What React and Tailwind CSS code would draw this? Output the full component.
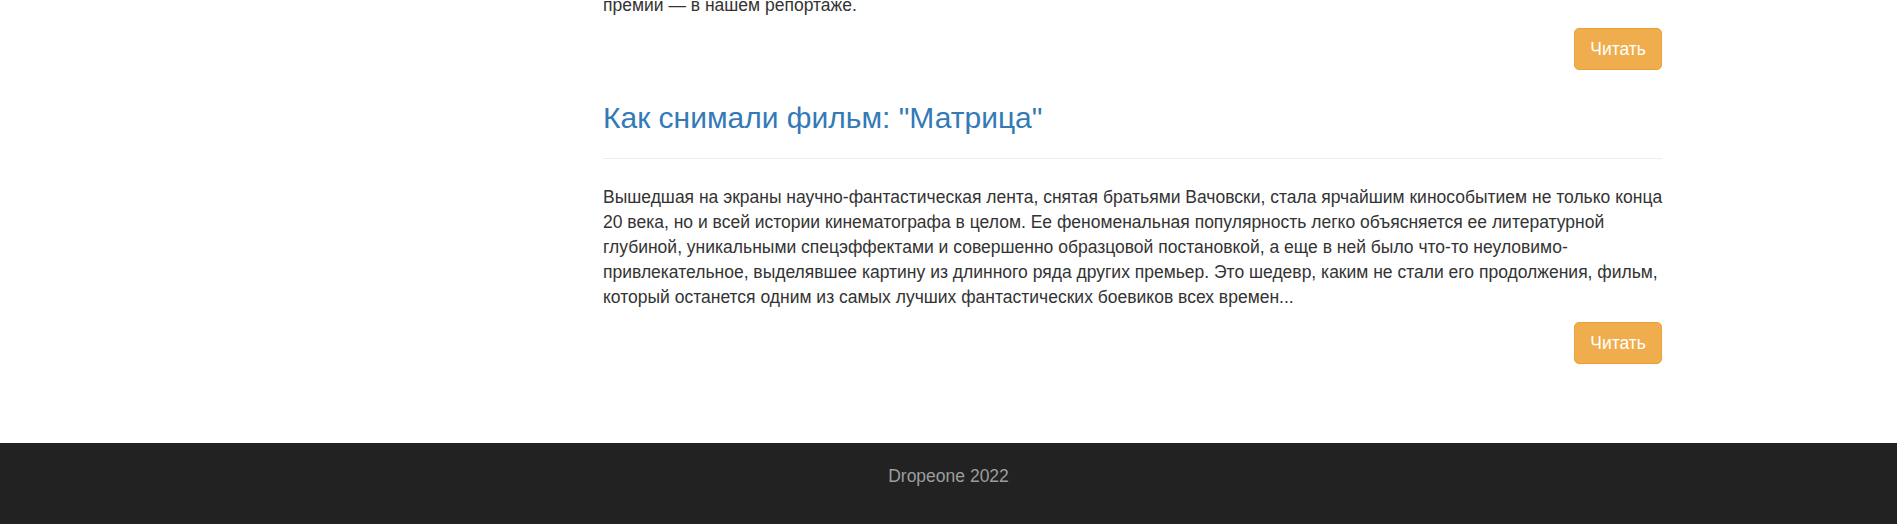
export default function App() {
	return (
		<div className="min-h-[524px] flex flex-col bg-white font-['Liberation_Sans',Arial,sans-serif] text-[17.5px] leading-[25px] text-[#333] overflow-hidden">
			<main className="flex-1 pl-[603px] pb-[79px]">
				<section className="w-[1059px]">
					{/* tail of previous post, scrolled off the top */}
					<article>
						<p className="-mt-[7.5px]">премии — в нашем репортаже.</p>
						<div className="flex justify-end mt-[10.5px]">
							<button className="h-[42px] px-[15px] rounded-[5px] bg-[#f0ad4e] border border-[#eea236] text-white">
								Читать
							</button>
						</div>
					</article>

					<article className="mt-[31px]">
						<h3 className="text-[30px] leading-[33px] text-[#337ab7]">
							Как снимали фильм: "Матрица"
						</h3>
						<hr className="mt-[24px] border-0 border-t border-[#eee]" />
						<p className="mt-[26px] w-[1064px]">
							Вышедшая на экраны научно-фантастическая лента, снятая братьями Вачовски, стала ярчайшим
							кинособытием не только конца <br />
							20 века, но и всей истории кинематографа в целом. Ее
							феноменальная популярность легко объясняется ее литературной глубиной, уникальными
							спецэффектами и совершенно образцовой постановкой, а еще в ней было что-то
							неуловимо-привлекательное, выделявшее картину из длинного ряда других премьер. Это
							шедевр, каким не стали его продолжения, фильм, который останется одним из самых лучших
							фантастических боевиков всех времен...
						</p>
						<div className="flex justify-end mt-[12px]">
							<button className="h-[42px] px-[15px] rounded-[5px] bg-[#f0ad4e] border border-[#eea236] text-white">
								Читать
							</button>
						</div>
					</article>
				</section>
			</main>

			<footer className="h-[81px] bg-[#222] pt-[21px] text-center text-[#9d9d9d]">
				Dropeone 2022
			</footer>
		</div>
	);
}
